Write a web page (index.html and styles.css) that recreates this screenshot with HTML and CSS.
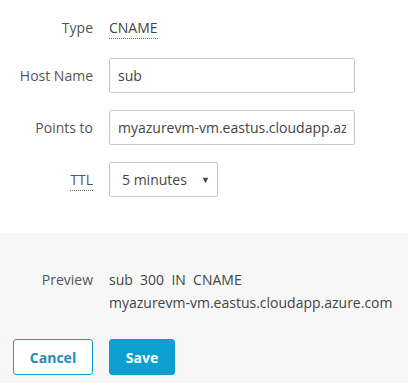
FILE: index.html
```html
<!DOCTYPE html>
<html>
<head>
<meta charset="utf-8">
<link rel="stylesheet" href="styles.css">
</head>
<body>
<div class="form">
  <div class="row row-type">
    <div class="label">Type</div>
    <div class="value"><span class="dotted">CNAME</span></div>
  </div>
  <div class="row">
    <div class="label">Host Name</div>
    <div class="field wide">sub</div>
  </div>
  <div class="row">
    <div class="label">Points to</div>
    <div class="field wide"><span class="clip">myazurevm-vm.eastus.cloudapp.azure.com</span></div>
  </div>
  <div class="row">
    <div class="label"><span class="dotted">TTL</span></div>
    <div class="field select"><span>5 minutes</span><span class="arrow">▼</span></div>
  </div>
</div>
<div class="footer">
  <div class="row row-preview">
    <div class="label">Preview</div>
    <div class="preview">sub  300  IN  CNAME<br>myazurevm-vm.eastus.cloudapp.azure.com</div>
  </div>
  <div class="buttons">
    <button class="btn btn-cancel">Cancel</button>
    <button class="btn btn-save">Save</button>
  </div>
</div>
</body>
</html>
```
FILE: styles.css
```css
html, body {
  margin: 0;
  padding: 0;
  background: #ffffff;
  font-family: "Open Sans", "Noto Sans", "Liberation Sans", sans-serif;
  font-size: 14px;
  color: #444444;
}
.form {
  padding: 18px 0 36px 0;
  display: flex;
  flex-direction: column;
  gap: 17px;
}
.row {
  display: grid;
  grid-template-columns: 93px auto;
  column-gap: 16px;
  align-items: center;
}
.row-type {
  margin-bottom: 3px;
  line-height: 20px;
}
.label {
  text-align: right;
  color: #555555;
}
.dotted {
  border-bottom: 1px dotted #666666;
  padding-bottom: 1px;
}
.value {
  color: #444444;
}
.field {
  box-sizing: border-box;
  height: 35px;
  border: 1px solid #c9c9c9;
  border-radius: 2px;
  padding: 0 8px;
  display: flex;
  align-items: center;
  color: #444444;
  background: #ffffff;
}
.wide {
  width: 246px;
}
.clip {
  display: block;
  overflow: hidden;
  white-space: nowrap;
  min-width: 0;
  flex: 1;
}
.select {
  width: 109px;
  padding: 0 7px 0 12px;
  justify-content: space-between;
}
.arrow {
  font-size: 9px;
  color: #444444;
}
.footer {
  background: #f7f7f7;
  padding: 35px 0 8px 0;
}
.row-preview {
  align-items: start;
  line-height: 23px;
}
.preview {
  white-space: pre;
  color: #444444;
}
.buttons {
  display: flex;
  gap: 16px;
  padding-left: 13px;
  margin-top: 25px;
}
.btn {
  box-sizing: border-box;
  height: 36px;
  border-radius: 3px;
  font-family: "Open Sans", "Noto Sans", "Liberation Sans", sans-serif;
  font-size: 14px;
  font-weight: 700;
  border: 1px solid #0c9fcf;
  padding: 0;
}
.btn-cancel {
  width: 80px;
  background: #ffffff;
  color: #1a8fb8;
}
.btn-save {
  width: 66px;
  background: #0c9fcf;
  color: #ffffff;
}
```
